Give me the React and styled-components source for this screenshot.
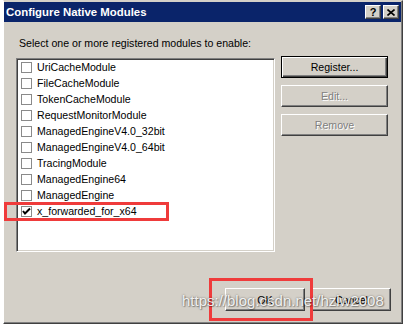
import styled, { createGlobalStyle, css } from 'styled-components';

const GlobalStyle = createGlobalStyle`
  html, body {
    margin: 0;
    padding: 0;
    background: #ffffff;
  }
  body {
    font-family: "Liberation Sans", "DejaVu Sans", sans-serif;
    font-size: 11px;
    color: #000;
  }
`;

const modules = [
  { name: 'UriCacheModule', checked: false },
  { name: 'FileCacheModule', checked: false },
  { name: 'TokenCacheModule', checked: false },
  { name: 'RequestMonitorModule', checked: false },
  { name: 'ManagedEngineV4.0_32bit', checked: false },
  { name: 'ManagedEngineV4.0_64bit', checked: false },
  { name: 'TracingModule', checked: false },
  { name: 'ManagedEngine64', checked: false },
  { name: 'ManagedEngine', checked: false },
  { name: 'x_forwarded_for_x64', checked: true },
];

const Window = styled.div`
  position: relative;
  box-sizing: border-box;
  margin-left: 3px;
  width: 400px;
  height: 324px;
  padding: 1px 1px 0 0;
  background: #d4d0c8;
  border-top: 1px solid #d4d0c8;
  border-left: 1px solid #ffffff;
  border-right: 1px solid #404040;
  border-bottom: 1px solid #404040;
  box-shadow: inset -1px -1px #808080;
`;

const TitleBar = styled.div`
  display: flex;
  align-items: center;
  justify-content: space-between;
  height: 20px;
  padding: 0 2px;
  background: #0a246a;
`;

const Title = styled.span`
  color: #fff;
  font-weight: bold;
  font-size: 11.4px;
`;

const TitleButtons = styled.div`
  display: flex;
  gap: 2px;
`;

const TitleButton = styled.div`
  box-sizing: border-box;
  width: 16px;
  height: 14px;
  display: flex;
  align-items: center;
  justify-content: center;
  background: #d4d0c8;
  border-top: 1px solid #fff;
  border-left: 1px solid #fff;
  border-right: 1px solid #404040;
  border-bottom: 1px solid #404040;
  box-shadow: inset -1px -1px #808080;
  font-weight: bold;
  font-size: 11px;
  line-height: 1;
`;

const Content = styled.div`
  padding: 0 9px 0 12px;
`;

const Prompt = styled.div`
  margin: 15px 0 0 3px;
  line-height: 13px;
  font-size: 10.6px;
`;

const Main = styled.div`
  display: flex;
  gap: 6px;
  margin-top: 6px;
`;

const ListBox = styled.div`
  box-sizing: border-box;
  width: 259px;
  height: 194px;
  margin-top: 2px;
  background: #fff;
  border-top: 1px solid #808080;
  border-left: 1px solid #808080;
  border-right: 1px solid #fff;
  border-bottom: 1px solid #fff;
  box-shadow: inset 1px 1px #404040, inset -1px -1px #d4d0c8;
  padding: 0 0 0 4px;
`;

const Row = styled.label`
  display: flex;
  align-items: center;
  gap: 5px;
  height: 16px;
  font-size: 10.6px;
  white-space: nowrap;
`;

const Box = styled.span`
  box-sizing: border-box;
  width: 11px;
  height: 11px;
  border: 1px solid #8a8a8a;
  background: #fff;
  display: flex;
  align-items: center;
  justify-content: center;
`;

const ButtonCol = styled.div`
  display: flex;
  flex-direction: column;
  gap: 7px;
  width: 107px;
`;

const Button = styled.div`
  box-sizing: border-box;
  width: ${(p) => p.$width || 107}px;
  height: ${(p) => p.$height || 22}px;
  display: flex;
  align-items: center;
  justify-content: center;
  background: #d4d0c8;
  font-size: 10.6px;
  border-top: 1px solid #fff;
  border-left: 1px solid #fff;
  border-right: 1px solid #404040;
  border-bottom: 1px solid #404040;
  box-shadow: inset -1px -1px #808080;
  ${(p) =>
    p.$default &&
    css`
      border: 1px solid #000;
      box-shadow: inset 1px 1px #fff, inset -1px -1px #404040, inset -2px -2px #808080;
    `}
  ${(p) =>
    p.$disabled &&
    css`
      color: #808080;
      text-shadow: 1px 1px #fff;
    `}
`;

const Footer = styled.div`
  display: flex;
  justify-content: flex-end;
  gap: 7px;
  margin-top: 36px;
  padding-right: 1px;
`;

const Highlight = styled.div`
  position: absolute;
  box-sizing: border-box;
  border: 3px solid #ef3b3b;
  pointer-events: none;
`;

const Watermark = styled.div`
  position: absolute;
  left: 178px;
  top: 291px;
  font-family: "Liberation Sans", sans-serif;
  font-size: 15px;
  color: rgba(255, 255, 255, 0.9);
  text-shadow: 0 0 2px rgba(0, 0, 0, 0.5), 1px 1px 1px rgba(0, 0, 0, 0.3);
  white-space: nowrap;
  pointer-events: none;
`;

const Check = () => (
  <svg width="9" height="9" viewBox="0 0 9 9">
    <path d="M1 4 L3 6.5 L8 1.5" stroke="#000" strokeWidth="2" fill="none" />
  </svg>
);

const Close = () => (
  <svg width="8" height="7" viewBox="0 0 8 7">
    <path d="M0.5 0.5 L7.5 6.5 M7.5 0.5 L0.5 6.5" stroke="#000" strokeWidth="1.6" fill="none" />
  </svg>
);

export default function App() {
  return (
    <>
      <GlobalStyle />
      <Window>
        <TitleBar>
          <Title>Configure Native Modules</Title>
          <TitleButtons>
            <TitleButton>?</TitleButton>
            <TitleButton>
              <Close />
            </TitleButton>
          </TitleButtons>
        </TitleBar>
        <Content>
          <Prompt>Select one or more registered modules to enable:</Prompt>
          <Main>
            <ListBox>
              {modules.map((m) => (
                <Row key={m.name}>
                  <Box>{m.checked && <Check />}</Box>
                  {m.name}
                </Row>
              ))}
            </ListBox>
            <ButtonCol>
              <Button $default>Register...</Button>
              <Button $disabled>Edit...</Button>
              <Button $disabled>Remove</Button>
            </ButtonCol>
          </Main>
          <Footer>
            <Button $width={80} $height={23}>OK</Button>
            <Button $width={79} $height={23}>Cancel</Button>
          </Footer>
        </Content>
        <Highlight style={{ left: 0, top: 201, width: 165, height: 19 }} />
        <Highlight style={{ left: 205, top: 277, width: 104, height: 43 }} />
        <Watermark>https://blog.csdn.net/hzlw2008</Watermark>
      </Window>
    </>
  );
}
